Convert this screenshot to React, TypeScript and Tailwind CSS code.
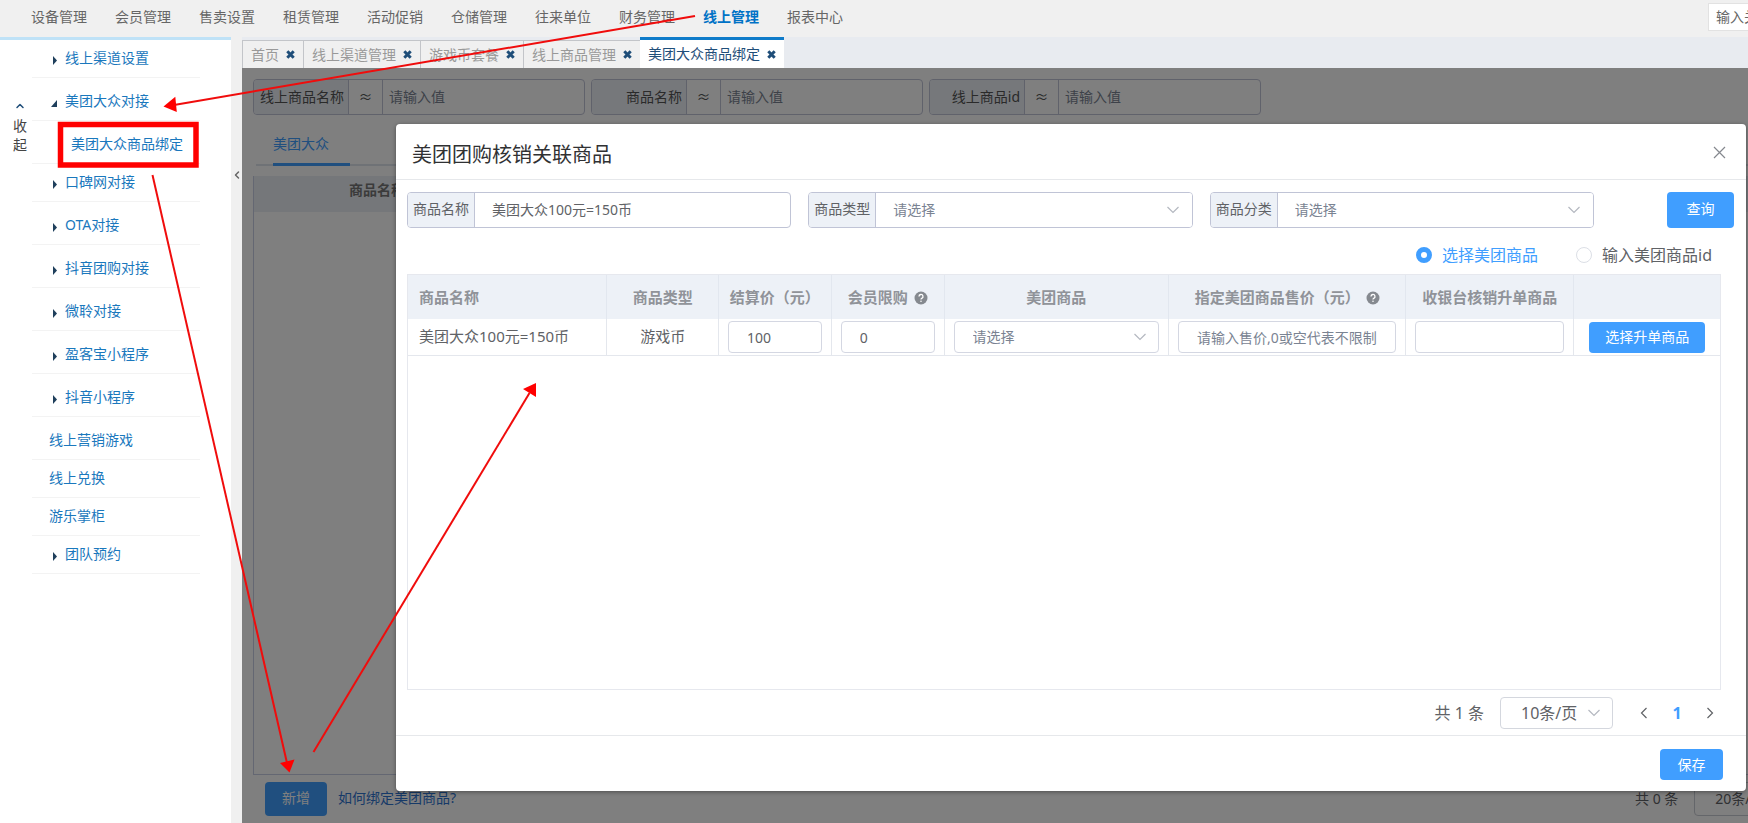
import { useState, type ReactNode } from 'react';
import { ChevronLeft, ChevronUp } from 'lucide-react';

const NAV = ['设备管理', '会员管理', '售卖设置', '租赁管理', '活动促销', '仓储管理', '往来单位', '财务管理', '线上管理', '报表中心'];

const TABS = ['首页', '线上渠道管理', '游戏币套餐', '线上商品管理', '美团大众商品绑定'];

type MenuItem = { label: string; kind: 'closed' | 'open' | 'leaf' | 'child'; tall?: boolean };

const MENU: MenuItem[] = [
  { label: '线上渠道设置', kind: 'closed' },
  { label: '美团大众对接', kind: 'open', tall: true },
  { label: '美团大众商品绑定', kind: 'child', tall: true },
  { label: '口碑网对接', kind: 'closed' },
  { label: 'OTA对接', kind: 'closed', tall: true },
  { label: '抖音团购对接', kind: 'closed', tall: true },
  { label: '微聆对接', kind: 'closed', tall: true },
  { label: '盈客宝小程序', kind: 'closed', tall: true },
  { label: '抖音小程序', kind: 'closed', tall: true },
  { label: '线上营销游戏', kind: 'leaf', tall: true },
  { label: '线上兑换', kind: 'leaf' },
  { label: '游乐掌柜', kind: 'leaf' },
  { label: '团队预约', kind: 'closed' },
];

function TopNav() {
  return (
    <header className="flex h-[37px] items-center bg-[#f0f0f0] pl-[31px]">
      <nav className="flex gap-7 leading-5 text-[#666]">
        {NAV.map((item) => (
          <a key={item} href="#" className={`pb-1 ${item === '线上管理' ? 'font-bold text-[#0072c6]' : ''}`}>
            {item}
          </a>
        ))}
      </nav>
      <div className="ml-auto w-10 overflow-hidden pb-1">
        <input
          aria-label="搜索"
          placeholder="输入关键字"
          className="h-7 w-40 border border-[#e2e2e2] bg-white px-[7px] placeholder:text-[#666]"
        />
      </div>
    </header>
  );
}

function MenuMark({ kind }: { kind: MenuItem['kind'] }) {
  return (
    <svg width="8" height="10" viewBox="0 0 8 10" className="mt-1 fill-[#1f3f5c]">
      {kind === 'open' ? <path d="M6 2v7H0z" /> : <path d="M2 1l4 4.500L2 10z" />}
    </svg>
  );
}

function Sidebar() {
  return (
    <aside className="flex w-[231px] shrink-0 border-t-3 border-[#bfe2f7] bg-white">
      <button className="flex w-8 flex-col items-center self-start pt-[60px] pl-2 leading-[19px] text-[#444]">
        <ChevronUp size={12} strokeWidth={3} className="mb-1 text-[#1f4e79]" />
        <span className="w-4">收起</span>
      </button>
      <ul className="w-[168px]">
        {MENU.map(({ label, kind, tall }) => (
          <li key={label} className={`border-b border-[#f3f3f3] ${tall ? 'pt-[5px]' : ''}`}>
            <a
              href="#"
              className={`flex h-[37px] items-center gap-[6px] pb-[2px] text-[#1a78bd] ${
                kind === 'leaf' ? 'pl-[17px]' : kind === 'child' ? 'pl-[39px]' : 'pl-[19px]'
              }`}
            >
              {(kind === 'closed' || kind === 'open') && <MenuMark kind={kind} />}
              {label}
            </a>
          </li>
        ))}
      </ul>
    </aside>
  );
}

function TabBar() {
  return (
    <div className="flex h-[31px] items-end bg-[#e8ebf0]">
      {TABS.map((tab, i) => {
        const active = i === TABS.length - 1;
        return (
          <div
            key={tab}
            className={`flex items-center gap-[7px] px-2 ${
              active
                ? 'h-[31px] border-t-3 border-[#0f7bc9] bg-white text-[#1f4e79]'
                : 'h-7 border-t border-l border-[#c3c5c9] bg-[#f0f0f0] text-[#999]'
            }`}
          >
            <a href="#">{tab}</a>
            <button aria-label={`关闭${tab}`}>
              <svg width="9" height="9" viewBox="0 0 9 9" className="stroke-[#1f4e79]">
                <path d="M1.300 1.300l6.400 6.400M7.700 1.300l-6.400 6.400" strokeWidth="3" />
              </svg>
            </button>
          </div>
        );
      })}
    </div>
  );
}

function SearchField({ label }: { label: string }) {
  return (
    <label className="flex h-9 w-[332px] overflow-hidden rounded border border-[#c0c4d6]">
      <span className="flex w-[94px] shrink-0 items-center justify-end bg-[#edf1f7] pr-1 text-[#555]">{label}</span>
      <span className="flex w-[35px] shrink-0 items-center justify-center border-x border-[#c0c4d6] text-[#555]">≈</span>
      <input placeholder="请输入值" className="min-w-0 flex-1 px-[6px] placeholder:text-[#7a8392]" />
    </label>
  );
}

function ListPage() {
  return (
    <div className="flex flex-1 flex-col bg-white pt-[11px] pl-[11px]">
      <div className="flex gap-[6px]">
        <SearchField label="线上商品名称" />
        <SearchField label="商品名称" />
        <SearchField label="线上商品id" />
      </div>
      <div className="mt-[9px] ml-[3px] flex border-b-2 border-[#dfe4ed] pl-[17px]">
        <button className="-mb-[2px] h-[42px] w-[77px] border-b-3 border-[#409eff] text-left text-[#409eff]">美团大众</button>
      </div>
      <div className="mt-[10px] flex-1 border-b border-l border-[#c9cfe4]">
        <div className="flex h-9 bg-[#ebeff5] pt-1 pl-[95px] leading-5 font-bold text-[#777]">商品名称</div>
      </div>
      <div className="flex h-12 items-center gap-[11px] pl-3">
        <button className="h-[34px] w-[62px] rounded bg-[#409eff] pb-[2px] text-white">新增</button>
        <a href="#" className="pb-[2px] text-[#2f74d0]">如何绑定美团商品?</a>
        <div className="ml-auto flex w-[113px] items-center gap-4 overflow-hidden whitespace-nowrap text-[#606266]">
          <span>共 0 条</span>
          <select aria-label="每页条数" className="h-[34px] w-28 shrink-0 appearance-none rounded border border-[#c9ccd4] px-5">
            <option>20条/页</option>
          </select>
        </div>
      </div>
    </div>
  );
}

function Select({ label, className, options = ['请选择'] }: { label?: string; className: string; options?: string[] }) {
  return (
    <span className="relative flex min-w-0 flex-1">
      <select aria-label={label} className={`w-full appearance-none bg-white ${className}`}>
        {options.map((o) => (
          <option key={o}>{o}</option>
        ))}
      </select>
      <svg
        width="14"
        height="8"
        viewBox="0 0 14 8"
        className="pointer-events-none absolute inset-y-0 right-3 my-auto fill-none stroke-[#b4b8c0]"
        strokeWidth="1.200"
      >
        <path d="M1.500 1L7 6.500L12.500 1" />
      </svg>
    </span>
  );
}

function Filter({ label, children }: { label: string; children: ReactNode }) {
  return (
    <label className="flex h-9 min-w-0 flex-1 overflow-hidden rounded border border-[#c0c4d6]">
      <span className="flex w-[67px] shrink-0 items-center justify-center border-r border-[#c0c4d6] bg-[#edf1f7] pb-[2px] text-[#606266]">
        {label}
      </span>
      {children}
    </label>
  );
}

function Help() {
  return (
    <svg width="14" height="14" viewBox="0 0 14 14" className="shrink-0">
      <circle cx="7" cy="7" r="6.500" className="fill-[#85898f]" />
      <path d="M5 5.500a2 2 0 1 1 2.800 1.800c-.5.300-.8.500-.8 1.200" className="fill-none stroke-white" strokeWidth="1.300" />
      <circle cx="7" cy="10.300" r=".8" className="fill-white" />
    </svg>
  );
}

function ProductTable() {
  const th = 'border-r border-[#e2e7ef] h-11 p-0 pt-[2px] font-bold text-[#909399]';
  const td = 'border-r border-b border-[#e4e7ed] h-[37px] px-[9px] py-0';
  const box = 'block h-8 w-full rounded border border-[#d4d7e2] bg-white px-[18px] text-sm';
  return (
    <div className="flex-1 border border-[#e6e8ee]">
      <table className="w-full table-fixed border-separate border-spacing-0 text-center text-[15px] text-[#606266]">
        <colgroup>
          <col className="w-[15.2%]" />
          <col className="w-[8.5%]" />
          <col className="w-[8.6%]" />
          <col className="w-[8.6%]" />
          <col className="w-[17.1%]" />
          <col className="w-[18.1%]" />
          <col className="w-[12.8%]" />
          <col className="w-[11.1%]" />
        </colgroup>
        <thead className="bg-[#edf1f7]">
          <tr>
            <th className={`${th} pl-[11px] text-left`}>商品名称</th>
            <th className={th}>商品类型</th>
            <th className={th}>结算价（元）</th>
            <th className={th}>
              <span className="flex items-center justify-center gap-[6px]">会员限购<Help /></span>
            </th>
            <th className={th}>美团商品</th>
            <th className={th}>
              <span className="flex items-center justify-center gap-[6px]">指定美团商品售价（元）<Help /></span>
            </th>
            <th className={th}>收银台核销升单商品</th>
            <th className="p-0" />
          </tr>
        </thead>
        <tbody>
          <tr>
            <td className={`${td} pl-[11px] text-left`}>美团大众100元=150币</td>
            <td className={td}>游戏币</td>
            <td className={td}>
              <input aria-label="结算价（元）" defaultValue="100" className={box} />
            </td>
            <td className={td}>
              <input aria-label="会员限购" defaultValue="0" className={box} />
            </td>
            <td className={td}>
              <Select label="美团商品" className="h-8 rounded border border-[#d4d7e2] px-[18px] text-sm text-[#7a8392]" />
            </td>
            <td className={td}>
              <input
                aria-label="指定美团商品售价（元）"
                placeholder="请输入售价,0或空代表不限制"
                className={`${box} placeholder:text-[#7a8392]`}
              />
            </td>
            <td className={td}>
              <input aria-label="收银台核销升单商品" className={box} />
            </td>
            <td className="border-b border-[#e4e7ed] p-0">
              <button className="h-[31px] w-[116px] rounded bg-[#409eff] text-sm text-white">选择升单商品</button>
            </td>
          </tr>
        </tbody>
      </table>
    </div>
  );
}

function PageArrow({ label, d }: { label: string; d: string }) {
  return (
    <button aria-label={label}>
      <svg width="8" height="12" viewBox="0 0 8 12" className="fill-none stroke-[#606266]" strokeWidth="1.200">
        <path d={d} />
      </svg>
    </button>
  );
}

function BindDialog() {
  const [mode, setMode] = useState('select');
  const radio =
    'size-4 appearance-none rounded-full border border-[#dcdfe6] bg-white checked:border-[5px] checked:border-[#409eff]';
  return (
    <div role="dialog" aria-label="美团团购核销关联商品" className="flex h-full flex-col rounded-sm bg-white shadow-[0_1px_4px_rgba(0,0,0,0.4)]">
      <div className="flex h-14 shrink-0 items-center justify-between border-b border-[#e6e8eb] pt-[6px] pr-5 pl-4">
        <h1 className="text-xl text-[#303133]">美团团购核销关联商品</h1>
        <button aria-label="关闭" className="pb-1">
          <svg width="13" height="13" viewBox="0 0 13 13" className="stroke-[#85888e]" strokeWidth="1.200">
            <path d="M1 1l11 11M12 1L1 12" />
          </svg>
        </button>
      </div>

      <div className="flex flex-1 flex-col pt-3 pr-3 pl-[11px]">
        <div className="flex gap-[17px]">
          <Filter label="商品名称">
            <input defaultValue="美团大众100元=150币" className="min-w-0 flex-1 px-[17px] text-[#606266]" />
          </Filter>
          <Filter label="商品类型">
            <Select className="px-[17px] text-[#7a8392]" />
          </Filter>
          <Filter label="商品分类">
            <Select className="px-[17px] text-[#7a8392]" />
          </Filter>
          <button className="ml-14 h-9 w-[67px] shrink-0 rounded bg-[#409eff] pb-[2px] text-white">查询</button>
        </div>

        <div className="flex h-[46px] items-center justify-end gap-[38px] pt-2 pr-[22px] text-base text-[#606266]">
          <label className={`flex items-center gap-[10px] ${mode === 'select' ? 'text-[#409eff]' : ''}`}>
            <input type="radio" name="mode" checked={mode === 'select'} onChange={() => setMode('select')} className={radio} />
            选择美团商品
          </label>
          <label className={`flex items-center gap-[10px] ${mode === 'input' ? 'text-[#409eff]' : ''}`}>
            <input type="radio" name="mode" checked={mode === 'input'} onChange={() => setMode('input')} className={radio} />
            输入美团商品id
          </label>
        </div>

        <div className="flex flex-1 flex-col pr-[13px]">
          <ProductTable />
        </div>

        <div className="flex h-[45px] items-center justify-end pr-5 text-base text-[#606266]">
          <span className="mr-4">共 1 条</span>
          <span className="mr-[27px] flex w-[113px]">
            <Select label="每页条数" options={['10条/页']} className="h-8 rounded-sm border border-[#d4d7de] px-5" />
          </span>
          <PageArrow label="上一页" d="M6.500 1L1.500 6L6.500 11" />
          <button className="w-[58px] font-bold text-[#409eff]">1</button>
          <PageArrow label="下一页" d="M1.500 1L6.500 6L1.500 11" />
        </div>
      </div>

      <div className="flex h-14 shrink-0 items-center justify-end border-t border-[#e6e8eb] pt-[2px] pr-[23px]">
        <button className="h-[31px] w-[63px] rounded bg-[#409eff] text-white">保存</button>
      </div>
    </div>
  );
}

// Red guide marks that walk through the steps on top of the page
function Guide() {
  return (
    <svg width="1748" height="823" className="pointer-events-none absolute top-0 left-0 fill-none stroke-[#f00c0c]" strokeWidth="2">
      <path d="M695 16L174 105" />
      <path d="M152.500 175L287 763" />
      <path d="M313.500 752L529.500 393" />
      <g stroke="none" className="fill-[#ff0000]">
        <path d="M163.500 106.500L175.300 96.700L176.800 112z" />
        <path d="M289.500 772.500L280 763L294.500 759.500z" />
        <path d="M536 383L523 389L536 397z" />
      </g>
      <rect x="60.500" y="124.500" width="135.500" height="40.500" className="stroke-[#ff0000]" strokeWidth="5.500" />
    </svg>
  );
}

export default function App() {
  return (
    <div className="relative flex min-h-screen flex-col overflow-hidden bg-white font-['Noto_Sans','Noto_Sans_CJK_SC',sans-serif] text-sm">
      <TopNav />
      <div className="flex flex-1">
        <Sidebar />
        <div className="flex w-[11px] shrink-0 flex-col items-center bg-[#f0f0f0] pt-[132px]">
          <button aria-label="收起菜单" className="text-[#666]">
            <ChevronLeft size={12} strokeWidth={3} />
          </button>
        </div>
        <main className="flex min-w-0 flex-1 flex-col">
          <TabBar />
          <div className="relative flex flex-1 flex-col">
            <ListPage />
            <div className="absolute inset-0 bg-black/50 pt-14 pr-[2px] pb-8 pl-[154px]">
              <BindDialog />
            </div>
          </div>
        </main>
      </div>
      <Guide />
    </div>
  );
}
